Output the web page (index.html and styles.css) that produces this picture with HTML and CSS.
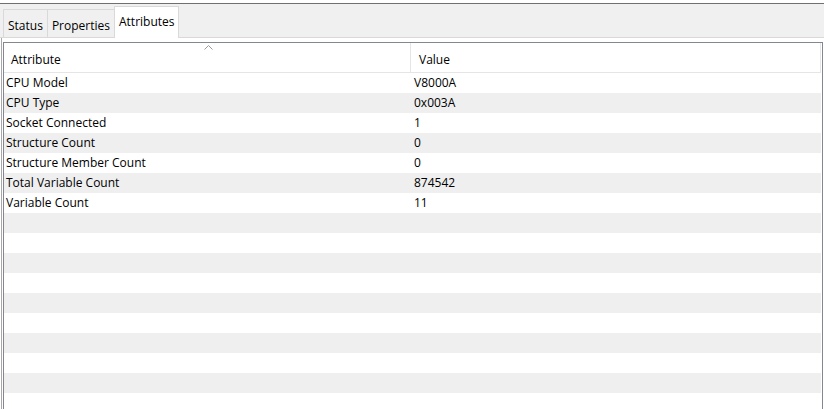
FILE: index.html
```html
<!DOCTYPE html>
<html>
<head>
  <meta charset="UTF-8">
  <title>Attributes</title>
  <link rel="stylesheet" href="styles.css">
</head>
<body>

  <div class="window">
    <div class="tabstrip">
      <div class="tab-gap"></div>
      <div class="tab">Status</div>
      <div class="tab">Properties</div>
      <div class="tab active">Attributes</div>
      <div class="tab-fill"></div>
    </div>

    <div class="panel">
      <div class="grid">
        <div class="grid-head">
          <div class="col col-name">
            Attribute
            <svg class="sort" width="9" height="5" viewBox="0 0 9 5"><polyline points="0.5,4.5 4.5,0.5 8.5,4.5" fill="none" stroke="#9a9a9a" stroke-width="1"/></svg>
          </div>
          <div class="col col-value">Value</div>
        </div>
        <div class="grid-body">
          <div class="row"><span class="cell-name">CPU Model</span><span class="cell-value">V8000A</span></div>
          <div class="row"><span class="cell-name">CPU Type</span><span class="cell-value">0x003A</span></div>
          <div class="row"><span class="cell-name">Socket Connected</span><span class="cell-value">1</span></div>
          <div class="row"><span class="cell-name">Structure Count</span><span class="cell-value">0</span></div>
          <div class="row"><span class="cell-name">Structure Member Count</span><span class="cell-value">0</span></div>
          <div class="row"><span class="cell-name">Total Variable Count</span><span class="cell-value">874542</span></div>
          <div class="row"><span class="cell-name">Variable Count</span><span class="cell-value">11</span></div>
        </div>
      </div>
    </div>
  </div>

</body>
</html>
```

FILE: styles.css
```css
html, body {
  margin: 0;
  height: 100%;
  overflow: hidden;
}
body {
  font-family: "Open Sans", "Noto Sans", sans-serif;
  font-size: 12px;
  color: #000;
  background: #fff;
}
.window {
  margin-top: 3px;
  border-top: 1px solid #6f6f6f;
  height: calc(100% - 4px);
  display: flex;
  flex-direction: column;
}
.tabstrip {
  display: flex;
  align-items: flex-end;
  height: 34px;
  background: #f0f0f0;
}
.tab-gap {
  width: 3px;
  border-bottom: 1px solid #d9d9d9;
}
.tab-fill {
  flex: 1;
  border-bottom: 1px solid #d9d9d9;
}
.tab {
  box-sizing: border-box;
  height: 29px;
  padding: 7px 4px 0 4px;
  border: 1px solid #d9d9d9;
  border-right: none;
  background: #f0f0f0;
  white-space: nowrap;
}
.tab.active {
  height: 32px;
  padding: 6px 3px 0 4px;
  border-right: 1px solid #d9d9d9;
  border-bottom: none;
  background: #fff;
}
.panel {
  flex: 1;
  min-height: 0;
  background: #fff;
  margin-left: 1px;
  border-left: 1px solid #a8a8a8;
  padding: 4px 1px 0 1px;
  display: flex;
}
.grid {
  flex: 1;
  border: 1px solid #828790;
  border-bottom: none;
  display: flex;
  flex-direction: column;
  min-height: 0;
}
.grid-head {
  display: flex;
  height: 29px;
  border-bottom: 1px solid #e5e5e5;
  border-right: 1px solid #e5e5e5;
  margin-right: 1px;
}
.col {
  box-sizing: border-box;
  padding: 8px 0 0 7px;
}
.col-name {
  width: 407px;
  border-right: 1px solid #e5e5e5;
  position: relative;
}
.col-value {
  flex: 1;
  padding-left: 8px;
}
.sort {
  position: absolute;
  left: 200px;
  top: 2px;
}
.grid-body {
  flex: 1;
  margin-right: 1px;
  background: repeating-linear-gradient(#fff 0 20px, #efefef 20px 40px);
}
.row {
  display: flex;
  height: 20px;
  line-height: 19px;
}
.cell-name {
  width: 407px;
  padding-left: 2px;
}
.cell-value {
  padding-left: 1px;
}
```
